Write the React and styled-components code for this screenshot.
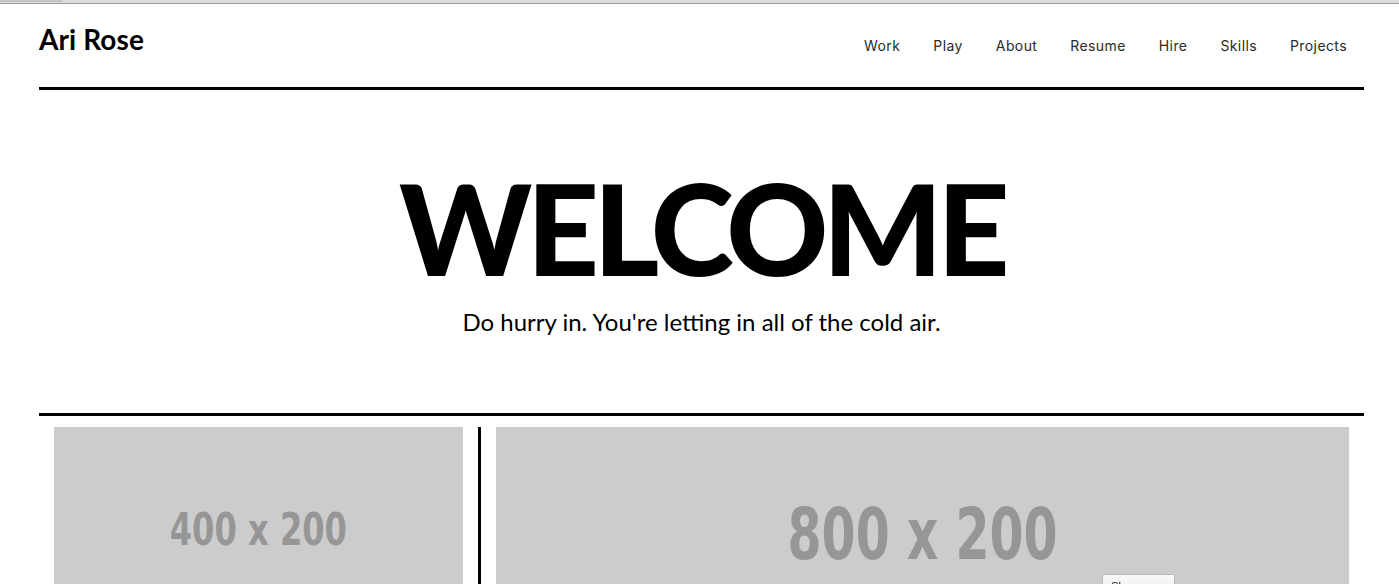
import React from "react";
import styled, { createGlobalStyle } from "styled-components";

const GlobalStyle = createGlobalStyle`
  html, body { margin: 0; padding: 0; background: #fff; }
  body { font-family: "Lato", "Open Sans", sans-serif; color: #000; overflow: hidden; }
`;

const ChromeStrip = styled.div`
  height: 3px;
  background: #dcdcdc;
  border-bottom: 1px solid #9c9c9c;
  display: flex;
`;

const ChromeTab = styled.div`
  width: 62px;
  height: 2px;
  background: #c4c4c4;
`;

const Page = styled.div`
  padding: 0 35px 0 39px;
`;

const Header = styled.header`
  display: flex;
  justify-content: space-between;
  align-items: flex-start;
  height: 83px;
`;

const Brand = styled.a`
  font-family: "Lato", sans-serif;
  font-weight: 700;
  font-size: 28px;
  line-height: 1;
  color: #000;
  text-decoration: none;
  margin-top: 21px;
  letter-spacing: 0.1px;
`;

const Nav = styled.nav`
  display: flex;
  margin-top: 35px;
  margin-right: 0.5px;
`;

const NavLink = styled.a`
  font-family: "Inter", sans-serif;
  font-size: 14px;
  line-height: 1;
  color: #2a2a2a;
  text-decoration: none;
  letter-spacing: 0.4px;
  padding: 0 16.5px;
`;

const Rule = styled.hr`
  margin: 0;
  border: none;
  height: 3px;
  background: #000;
`;

const Hero = styled.section`
  text-align: center;
  padding: 75px 0 79px;
`;

const Title = styled.h1`
  margin: 0;
  font-family: "Lato", sans-serif;
  font-weight: 900;
  font-size: 126px;
  line-height: 1;
  letter-spacing: -5.6px;
`;

const Lead = styled.p`
  margin: 19px 0 0;
  font-family: "Lato", sans-serif;
  font-size: 24px;
  line-height: 1;
`;

const Row = styled.div`
  display: grid;
  grid-template-columns: 1fr 2fr;
  margin-top: 11px;
`;

const Col = styled.div`
  padding: 0 15px;
  border-right: ${(p) => (p.$divider ? "3px solid #000" : "none")};
`;

const Placeholder = styled.div`
  background: #cccccc;
  color: #969696;
  aspect-ratio: ${(p) => p.$ratio};
  display: flex;
  align-items: center;
  justify-content: center;
  font-family: "DejaVu Sans", sans-serif;
  font-weight: 700;
  font-size: ${(p) => p.$size}px;
`;

const Label = styled.span`
  display: inline-block;
  transform: scaleX(${(p) => p.$scale});
  white-space: nowrap;
`;

const ShowApps = styled.button`
  position: fixed;
  left: 1102px;
  top: 574px;
  width: 73px;
  height: 22px;
  padding: 2px 0 0;
  font-family: "Liberation Sans", sans-serif;
  font-size: 11px;
  color: #000;
  background: linear-gradient(#fafafa, #e8e8e8);
  border: 1px solid #b8b8b8;
  border-radius: 2px;
  text-align: center;
  vertical-align: top;
  line-height: 1;
`;

const links = ["Work", "Play", "About", "Resume", "Hire", "Skills", "Projects"];

export default function App() {
  return (
    <>
      <GlobalStyle />
      <ChromeStrip>
        <ChromeTab />
      </ChromeStrip>
      <Page>
        <Header>
          <Brand href="#">Ari Rose</Brand>
          <Nav>
            {links.map((l) => (
              <NavLink key={l} href="#">
                {l}
              </NavLink>
            ))}
          </Nav>
        </Header>
        <Rule />
        <Hero>
          <Title>WELCOME</Title>
          <Lead>Do hurry in. You're letting in all of the cold air.</Lead>
        </Hero>
        <Rule />
        <Row>
          <Col $divider>
            <Placeholder $ratio="2 / 1" $size={44}>
              <Label $scale={0.73}>400 x 200</Label>
            </Placeholder>
          </Col>
          <Col>
            <Placeholder $ratio="4 / 1" $size={72}>
              <Label $scale={0.68}>800 x 200</Label>
            </Placeholder>
          </Col>
        </Row>
      </Page>
      <ShowApps>Show apps</ShowApps>
    </>
  );
}
